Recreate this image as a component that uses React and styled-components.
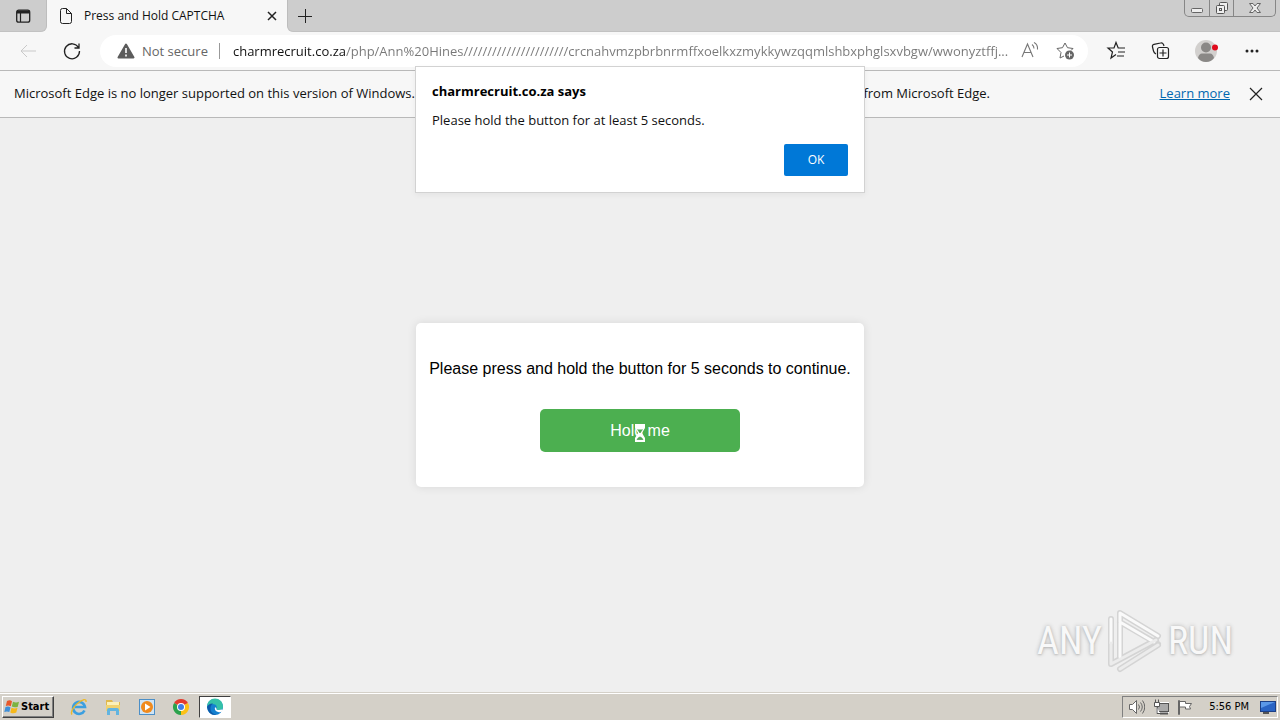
import styled, { createGlobalStyle } from "styled-components"

const ui = `"Open Sans", "Noto Sans", sans-serif`
const classic = `"DejaVu Sans Condensed", "DejaVu Sans", sans-serif`

const GlobalStyle = createGlobalStyle`
    *{
        box-sizing: border-box;
    }
    body{
        margin: 0;
        background: #efefef;
        font-family: ${ui};
        font-size: 13px;
        line-height: 18px;
        color: #111;
    }
    button{
        font: inherit;
        color: inherit;
        border: none;
        background: none;
        padding: 0;
    }
    svg{
        display: block;
    }
`
const Screen = styled.div`
    position: relative;
    display: flex;
    flex-direction: column;
    min-height: 100vh;
`

/* tab strip */
const TabStrip = styled.header`
    display: flex;
    height: 32px;
    background: #f7f7f7;
`
const TabActions = styled.div`
    display: flex;
    align-items: center;
    justify-content: center;
    width: 47px;
    background: #cdcdcd;
    border-right: 1px solid #bdbdbd;
    border-bottom: 1px solid #c2c2c2;
    border-bottom-right-radius: 6px;
`
const Tab = styled.div`
    display: flex;
    align-items: center;
    width: 240px;
    padding: 0 8px 0 11px;
    gap: 10px;
    font-size: 12px;
`
const TabTitle = styled.span`
    flex: 1;
    white-space: nowrap;
`
const StripRest = styled.div`
    display: flex;
    flex: 1;
    align-items: flex-start;
    justify-content: space-between;
    padding-right: 4px;
    background: #cdcdcd;
    border-left: 1px solid #bdbdbd;
    border-bottom: 1px solid #c2c2c2;
    border-bottom-left-radius: 6px;
`
const NewTab = styled.button`
    height: 31px;
    padding: 0 9px;
`
const WindowButtons = styled.div`
    display: flex;
    height: 17px;
    border: 1px solid #868686;
    border-top: none;
    border-radius: 0 0 5px 5px;
`
const WindowButton = styled.button`
    display: flex;
    justify-content: center;
    align-items: center;
    width: ${({$wide}) => $wide ? "42px" : "24px"};
    & + &{
        border-left: 1px solid #868686;
    }
`

/* toolbar */
const Toolbar = styled.div`
    display: flex;
    align-items: center;
    height: 39px;
    padding: 0 16px 0 18px;
    background: #f7f7f7;
    border-bottom: 1px solid #b9b9b9;
`
const NavButtons = styled.div`
    display: flex;
    gap: 24px;
    margin-right: 18px;
`
const AddressBar = styled.div`
    display: flex;
    flex: 1;
    align-items: center;
    height: 32px;
    padding: 0 12px 0 17px;
    border-radius: 16px;
    background: #fff;
    color: #666;
`
const SiteInfo = styled.button`
    display: flex;
    align-items: center;
    gap: 7px;
    padding-right: 11px;
    border-right: 1px solid #999;
    line-height: 16px;
    white-space: nowrap;
`
/* host is darker than the path */
const Address = styled.input`
    flex: 1;
    min-width: 0;
    height: 24px;
    margin: 0 8px 0 13px;
    padding: 0;
    border: none;
    outline: none;
    font: 13px ${ui};
    text-overflow: ellipsis;
    color: transparent;
    background: linear-gradient(to right, #111 113px, #777 113px);
    background-clip: text;
`
const AddressButtons = styled.div`
    display: flex;
    gap: 16px;
`
const ToolButtons = styled.div`
    display: flex;
    align-items: center;
    gap: 22px;
    margin-left: 18px;
`

/* unsupported system notice */
const InfoBar = styled.div`
    display: flex;
    align-items: center;
    justify-content: space-between;
    height: 47px;
    padding: 0 16px 2px 14px;
    background: #f7f7f7;
    border-bottom: 1px solid #b9b9b9;
`
const InfoText = styled.p`
    display: flex;
    flex: 1;
    justify-content: space-between;
    max-width: 976px;
    margin: 0;
    white-space: nowrap;
`
const InfoActions = styled.div`
    display: flex;
    align-items: center;
    gap: 18px;
`
const InfoLink = styled.a`
    color: #0067b0;
`

/* javascript alert */
const Alert = styled.div`
    position: absolute;
    top: 66px;
    left: 50%;
    width: 450px;
    transform: translateX(-50%);
    display: flex;
    flex-direction: column;
    padding: 15px 16px 16px;
    background: #fff;
    border: 1px solid #d2d2d2;
    box-shadow: 0 2px 6px rgba(0, 0, 0, 0.05);
`
const AlertTitle = styled.h1`
    margin: 0 0 11px;
    font-size: 13px;
    line-height: 18px;
    color: #000;
`
const AlertText = styled.p`
    margin: 0 0 15px;
`
const OkButton = styled.button`
    align-self: flex-end;
    width: 64px;
    height: 32px;
    border-radius: 2px;
    background: #0078d7;
    color: #fff;
    font-size: 12px;
`

/* page */
const Page = styled.main`
    position: relative;
    display: flex;
    flex: 1;
    align-items: center;
    justify-content: center;
    font-family: "Liberation Sans", Arial, sans-serif;
    font-size: 16px;
    line-height: 18px;
`
const Card = styled.section`
    display: flex;
    flex-direction: column;
    align-items: center;
    gap: 31px;
    padding: 37px 13px 35px;
    border-radius: 5px;
    background: #fff;
    box-shadow: 0 0 10px rgba(0, 0, 0, 0.1);
    color: #000;
    p{
        margin: 0;
    }
`
const HoldButton = styled.button`
    position: relative;
    width: 200px;
    height: 43px;
    border-radius: 5px;
    background: #4caf50;
    color: #fff;
`
const Cursor = styled.svg`
    position: absolute;
    top: 15px;
    left: 95px;
`
const Watermark = styled.div`
    position: absolute;
    right: 47px;
    bottom: 19px;
    display: flex;
    align-items: center;
    gap: 4px;
    font: 38px/64px "Roboto Condensed", Roboto, sans-serif;
    color: #f8f8f8;
    text-shadow: 0 0 4px #b4b4b4, 0 1px 2px #c4c4c4;
`

/* taskbar */
const Taskbar = styled.footer`
    display: flex;
    align-items: center;
    height: 28px;
    padding: 1px 2px 0;
    background: #d4d0c8;
    border-top: 1px solid #d4d0c8;
    box-shadow: inset 0 1px #fff;
    font-family: ${classic};
    font-size: 11px;
    line-height: 14px;
    color: #000;
`
const StartButton = styled.button`
    display: flex;
    align-items: center;
    gap: 1px;
    width: 52px;
    height: 22px;
    padding-left: 1px;
    margin-right: 9px;
    font-weight: bold;
    border: 1px solid;
    border-color: #fff #404040 #404040 #fff;
    box-shadow: inset -1px -1px #808080;
`
const TaskButton = styled.button`
    display: flex;
    align-items: center;
    justify-content: center;
    width: 32px;
    height: 22px;
    margin-right: 2px;
    border: 1px solid transparent;
    ${({$active}) => $active && `
        background: #fff;
        border-color: #404040 #fff #fff #404040;
    `}
`
const Tray = styled.div`
    display: flex;
    align-items: center;
    gap: 8px;
    height: 22px;
    margin-left: auto;
    padding: 0 1px 0 6px;
    border: 1px solid;
    border-color: #808080 #fff #fff #808080;
`
const Clock = styled.time`
    margin: 0 3px 0 8px;
    white-space: nowrap;
`

const Line = ({size = 16, color = "#222", width = 1, children}) => (
    <svg width={size} height={size} viewBox={`0 0 ${size} ${size}`} fill="none" stroke={color} strokeWidth={width}>
        {children}
    </svg>
)

const Browser = () => (
    <>
        <TabStrip>
            <TabActions>
                <button aria-label="Tab actions">
                    <Line>
                        <rect x="1.700" y="2.200" width="13" height="12" rx="2" strokeWidth="1.300"/>
                        <path d="M2 4h12.500" strokeWidth="3"/>
                        <path d="M5.500 5v9" strokeWidth="1.200"/>
                    </Line>
                </button>
            </TabActions>
            <Tab>
                <Line>
                    <path d="M2.500 2.500q0-2 2-2h4l5 5v8q0 2-2 2h-7q-2 0-2-2zM8.500 .5v5h5"/>
                </Line>
                <TabTitle>Press and Hold CAPTCHA</TabTitle>
                <button aria-label="Close tab">
                    <Line size={14} width={1.5}><path d="M3 3l8 8M11 3l-8 8"/></Line>
                </button>
            </Tab>
            <StripRest>
                <NewTab aria-label="New tab">
                    <Line><path d="M8.500 1v14M1 8.500h14"/></Line>
                </NewTab>
                <WindowButtons>
                    <WindowButton aria-label="Minimize">
                        <Line color="#666"><rect x="2.500" y="8.500" width="11" height="4" rx="1" fill="#eee"/></Line>
                    </WindowButton>
                    <WindowButton aria-label="Restore">
                        <Line color="#555">
                            <rect x="5.500" y="2.500" width="8" height="8" rx="1" fill="#eee"/>
                            <rect x="2.500" y="5.500" width="8" height="8" rx="1" fill="#eee"/>
                            <rect x="5.500" y="8.500" width="2" height="2"/>
                        </Line>
                    </WindowButton>
                    <WindowButton $wide aria-label="Close">
                        <Line color="#666">
                            <path d="M2.500 3.500h3.500l2 2.500 2-2.500h3.500l-3.500 4.500 3.500 4.500H10l-2-2.500-2 2.500H2.500L6 8z" fill="#eee"/>
                        </Line>
                    </WindowButton>
                </WindowButtons>
            </StripRest>
        </TabStrip>
        <Toolbar>
            <NavButtons>
                <button aria-label="Back">
                    <Line size={20} color="#c9c9c9"><path d="M18 10H3M9 4l-6 6 6 6"/></Line>
                </button>
                <button aria-label="Refresh">
                    <Line size={20} width={1.3}><path d="M16.500 6.500A7.500 7.500 0 1 0 17.500 10M17 2.500v4.500h-4.500"/></Line>
                </button>
            </NavButtons>
            <AddressBar>
                <SiteInfo>
                    <svg width="18" height="16" viewBox="0 0 18 16">
                        <path d="M9 1.500L16.500 14.500h-15z" fill="#5c5c5c" stroke="#5c5c5c" strokeWidth="2" strokeLinejoin="round"/>
                        <path d="M9 5v5M9 11.500v2" stroke="#fff" strokeWidth="1.600"/>
                    </svg>
                    Not secure
                </SiteInfo>
                <Address
                    aria-label="Address"
                    readOnly
                    value="charmrecruit.co.za/php/Ann%20Hines//////////////////////crcnahvmzpbrbnrmffxoelkxzmykkywzqqmlshbxphglsxvbgw/wwonyztffj..."
                />
                <AddressButtons>
                    <button aria-label="Read aloud">
                        <Line size={20} color="#777" width={1.1}>
                            <path d="M2 16L7.500 3 13 16M4 11.500h7M12 3.500q2 1.500 2 4M14 1.500q4 2 3.500 7"/>
                        </Line>
                    </button>
                    <button aria-label="Add to favorites">
                        <Line size={20} color="#666">
                            <path d="M8 15l-4 2 1-5.500-4-4 5.500-.8L9 2l2.500 4.700 5.500.8-2 2"/>
                            <circle cx="13.500" cy="14" r="4.500" fill="#666" stroke="none"/>
                            <path d="M13.500 11.500v5M11 14h5" stroke="#fff"/>
                        </Line>
                    </button>
                </AddressButtons>
            </AddressBar>
            <ToolButtons>
                <button aria-label="Favorites">
                    <Line size={22} width={1.2}>
                        <path d="M10 14.500l-5 3.500 1.500-6L2 8h6l2-5.500L12.200 8H19M12 12h7M11 16h7"/>
                    </Line>
                </button>
                <button aria-label="Collections">
                    <Line size={22} width={1.2}>
                        <path d="M6 14q-2-1-2.500-3L2.500 7q-.5-2 1.500-2.700L10.500 3q2-.5 3 1.500L14 6"/>
                        <rect x="7.500" y="7.500" width="11" height="11" rx="2"/>
                        <path d="M13 9.500v7M9.500 13h7"/>
                    </Line>
                </button>
                <button aria-label="Profile">
                    <svg width="24" height="24" viewBox="0 0 24 24">
                        <circle cx="12" cy="12" r="11" fill="#d2d0ce"/>
                        <circle cx="12" cy="8.500" r="5" fill="#8a8886"/>
                        <path d="M4 19q1-4.500 4-4.500h8q3 0 4 4.500-3 4-8 4t-8-4z" fill="#8a8886"/>
                        <circle cx="21" cy="8.500" r="3" fill="#e00b1c"/>
                    </svg>
                </button>
                <button aria-label="Settings and more">
                    <svg width="24" height="24" viewBox="0 0 24 24" fill="#222">
                        <circle cx="7" cy="12" r="1.500"/>
                        <circle cx="12" cy="12" r="1.500"/>
                        <circle cx="17" cy="12" r="1.500"/>
                    </svg>
                </button>
            </ToolButtons>
        </Toolbar>
        <InfoBar>
            <InfoText>
                <span>Microsoft Edge is no longer supported on this version of Windows.</span>
                <span>from Microsoft Edge.</span>
            </InfoText>
            <InfoActions>
                <InfoLink href="#learn">Learn more</InfoLink>
                <button aria-label="Dismiss">
                    <Line width={1.2}><path d="M2 3l12 12M14 3L2 15"/></Line>
                </button>
            </InfoActions>
        </InfoBar>
    </>
)

const PlayLogo = () => (
    <svg width="58" height="64" viewBox="0 0 58 64" fill="none" strokeLinecap="round" strokeLinejoin="round">
        <g stroke="#d4d4d4" strokeWidth="6">
            <path d="M14 48V4l38 23M14 13l38 22M5 10v45l45-24M14 60l38-24"/>
        </g>
        <g stroke="#fafafa" strokeWidth="3">
            <path d="M14 48V4l38 23M14 13l34 20M5 10v24"/>
        </g>
        <g stroke="#ececec" strokeWidth="3">
            <path d="M5 34v21l45-24M14 60l38-24"/>
        </g>
    </svg>
)

const BottomBar = () => (
    <Taskbar>
        <StartButton>
            <svg width="16" height="16" viewBox="0 0 16 16">
                <path d="M3 2q3-1.500 5 .3L6.800 7.300Q4.500 6 1.800 7z" fill="#e8582a"/>
                <path d="M9 2.700q3 1.500 6 0L13.800 7.800q-3 1.200-6-.2z" fill="#7cb342"/>
                <path d="M1.500 8q3-1 5 .4L5.300 13Q3 11.800.3 13z" fill="#3f8fd8"/>
                <path d="M7.500 8.700q3 1.500 6 .1L12.300 13.600q-3 1.400-6-.2z" fill="#f6b81a"/>
            </svg>
            Start
        </StartButton>
        <TaskButton aria-label="Internet Explorer">
            <svg width="18" height="18" viewBox="0 0 18 18" fill="none">
                <path d="M14.500 12.500A6 6 0 1 1 15 9H5" stroke="#3b9fe0" strokeWidth="2.600"/>
                <path d="M2 16.500C-.5 13 7 4 13.500 1.800q3-.8 2.500 2.200" stroke="#ecb92b" strokeWidth="1.400"/>
            </svg>
        </TaskButton>
        <TaskButton aria-label="Windows Explorer">
            <svg width="18" height="18" viewBox="0 0 18 18">
                <path d="M2 2h6l1 2h7v9H2z" fill="#e0b84c"/>
                <path d="M3 4h12v5H3z" fill="#fbf0b8"/>
                <path d="M2 7h14v6H2z" fill="#f0d270"/>
                <path d="M3 17v-5q0-2 2-2h8q2 0 2 2v5h-3v-4H6v4z" fill="#62b4e0"/>
            </svg>
        </TaskButton>
        <TaskButton aria-label="Media Player">
            <svg width="18" height="18" viewBox="0 0 18 18">
                <rect x="1.500" y="1.500" width="15" height="15" fill="#cfe4f5" stroke="#4c8fc7"/>
                <circle cx="9" cy="9" r="6" fill="#f08a1d"/>
                <path d="M7 5.500l5.500 3.500L7 12.500z" fill="#fff"/>
            </svg>
        </TaskButton>
        <TaskButton aria-label="Chrome">
            <svg width="18" height="18" viewBox="0 0 18 18">
                <path d="M9 9L2.070 5A8 8 0 0 1 15.930 5z" fill="#e33b2e"/>
                <path d="M9 9L15.930 5A8 8 0 0 1 9 17z" fill="#fbc116"/>
                <path d="M9 9v8A8 8 0 0 1 2.070 5z" fill="#2ba24c"/>
                <circle cx="9" cy="9" r="4" fill="#fff"/>
                <circle cx="9" cy="9" r="3" fill="#3f7fe8"/>
            </svg>
        </TaskButton>
        <TaskButton $active aria-label="Edge">
            <svg width="18" height="18" viewBox="0 0 18 18">
                <circle cx="9" cy="9" r="8" fill="#1480cf"/>
                <path d="M1 8.500A8 8 0 0 1 17 8.500q0 3.500-4 3.500-3 0-2.500-1.500Q11.500 7 8 6.200 4 5.500 1 8.500z" fill="#35c1a8"/>
                <path d="M1 9q2-4 6-3.500-3 2-2.500 6t6 5.400Q3 18 1 9z" fill="#0d5aa8"/>
                <path d="M9 9q-1 4 3 5t5-1.500q0-1.500-4-.5-3 0-2.500-1.500z" fill="#fff"/>
            </svg>
        </TaskButton>
        <Tray>
            <Line color="#666">
                <path d="M.5 5.500h3l4-4v13l-4-4h-3z" fill="#fff"/>
                <path d="M9.500 5.500q2 2.500 0 5M11.500 3.500q3.500 4.500 0 9M13.500 1.500q4.500 6.500 0 13"/>
            </Line>
            <Line color="#555">
                <rect x="4.500" y="4.500" width="11" height="8" fill="#b8b8b8" stroke="#fff" strokeWidth="3"/>
                <rect x="4.500" y="4.500" width="11" height="8" fill="#aaa"/>
                <path d="M7 14.500h8" strokeWidth="2"/>
                <path d="M1.500 3.500h5v4h-5zM2.500 3V.5M5.500 3V.5M4 8v6.500h3" fill="#fff"/>
            </Line>
            <Line color="#666">
                <path d="M1.500 15.500V1.500h1v14zM2.500 2.500h6v2h6l-2 3 1 2.500H8.500v-2h-6z" fill="#fff"/>
            </Line>
            <Clock>5:56 PM</Clock>
            <svg width="16" height="16" viewBox="0 0 16 16">
                <rect x=".5" y="2.500" width="15" height="10" fill="#2a64c4" stroke="#1c3f86"/>
                <path d="M1 3h14L1 9z" fill="#5b98e8"/>
                <path d="M3 14h6" stroke="#555" strokeWidth="2"/>
            </svg>
        </Tray>
    </Taskbar>
)

export default function App() {
    return (
        <Screen>
            <GlobalStyle/>
            <Browser/>
            <Page>
                <Card>
                    <p>Please press and hold the button for 5 seconds to continue.</p>
                    <HoldButton>
                        Hold me
                        <Cursor width="10" height="18" viewBox="0 0 10 18">
                            <path d="M0 0h10v4L7 9l3 5v4H0v-4l3-5-3-5z" fill="#fff"/>
                            <path d="M2.500 5.500L5 9l2.500-3.500M2 15.500q3-5 6 0z" fill="#4caf50" stroke="#3c8f40" strokeWidth=".6"/>
                        </Cursor>
                    </HoldButton>
                </Card>
                <Watermark>
                    ANY
                    <PlayLogo/>
                    RUN
                </Watermark>
            </Page>
            <BottomBar/>
            <Alert role="alertdialog" aria-labelledby="alert-title">
                <AlertTitle id="alert-title">charmrecruit.co.za says</AlertTitle>
                <AlertText>Please hold the button for at least 5 seconds.</AlertText>
                <OkButton>OK</OkButton>
            </Alert>
        </Screen>
    )
}
